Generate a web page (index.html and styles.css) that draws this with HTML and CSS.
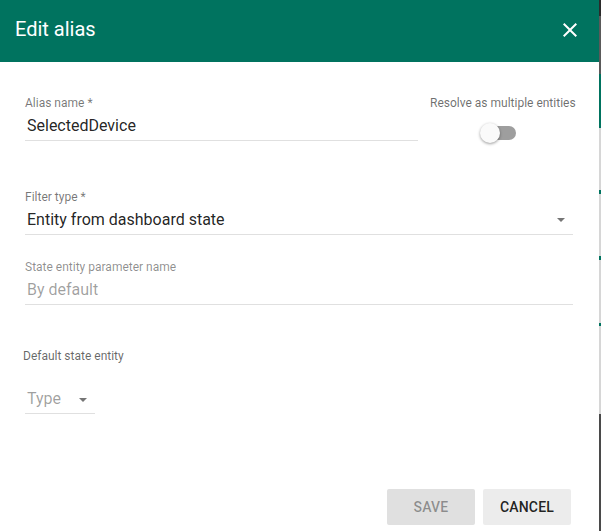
FILE: index.html
```html
<!DOCTYPE html>
<html>
<head>
<meta charset="utf-8">
<link rel="stylesheet" href="styles.css">
</head>
<body>
<div class="page">
  <div class="dialog">
    <div class="header">
      <span class="title">Edit alias</span>
      <svg class="close" width="24" height="24" viewBox="0 0 24 24"><path d="M19 6.41L17.59 5 12 10.59 6.41 5 5 6.41 10.59 12 5 17.59 6.41 19 12 13.41 17.59 19 19 17.59 13.41 12z" fill="#fff"/></svg>
    </div>
    <div class="content">
      <div class="row-top">
        <div class="field alias">
          <div class="label">Alias name *</div>
          <div class="value">SelectedDevice</div>
        </div>
        <div class="resolve">
          <div class="label dark">Resolve as multiple entities</div>
          <div class="toggle"><span class="track"></span><span class="thumb"></span></div>
        </div>
      </div>
      <div class="field filter">
        <div class="label">Filter type *</div>
        <div class="value select">Entity from dashboard state<span class="arrow"></span></div>
      </div>
      <div class="field param">
        <div class="label light">State entity parameter name</div>
        <div class="value placeholder">By default</div>
      </div>
      <div class="section-label">Default state entity</div>
      <div class="type-select">
        <span class="placeholder">Type</span><span class="arrow"></span>
      </div>
    </div>
    <div class="actions">
      <button class="btn save">SAVE</button>
      <button class="btn cancel">CANCEL</button>
    </div>
  </div>
  <div class="strip">
    <div class="s1"></div><div class="s2"></div><div class="s3"></div><div class="s4"></div>
    <div class="s5"></div><div class="s4"></div><div class="s5"></div><div class="s4"></div>
    <div class="s5"></div><div class="s4"></div><div class="s6"></div><div class="s7"></div>
  </div>
</div>
</body>
</html>
```
FILE: styles.css
```css
* { box-sizing: border-box; }
html, body { margin: 0; padding: 0; }
body { font-family: Roboto, "Noto Sans", sans-serif; background: #fff; }
.page { display: flex; width: 601px; height: 531px; overflow: hidden; }
.dialog { width: 599px; height: 531px; display: flex; flex-direction: column; background: #fff; }
.header { height: 62px; background: #00735f; display: flex; align-items: center; justify-content: space-between; padding: 0 17px 0 15px; }
.title { color: #fff; font-size: 20px; line-height: 24px; margin-top: -4px; }
.close { width: 24px; height: 24px; margin-top: -2px; }
.content { padding: 0 0 0 25px; flex: 1; }
.label { font-size: 12px; line-height: 14px; color: rgba(0,0,0,0.54); }
.label.dark { color: rgba(0,0,0,0.58); }
.label.light { color: rgba(0,0,0,0.45); }
.value { font-size: 16px; line-height: 20px; color: rgba(0,0,0,0.87); padding: 6px 2px 4px; border-bottom: 1px solid rgba(0,0,0,0.12); }
.row-top { display: flex; padding-top: 34px; }
.alias { width: 393px; }
.resolve { margin-left: 12px; display: flex; flex-direction: column; align-items: center; padding-top: 0; }
.toggle { position: relative; width: 36px; height: 20px; margin-top: 13px; margin-left: -7px; }
.track { position: absolute; left: 3px; top: 3px; width: 32px; height: 14px; border-radius: 7px; background: #9e9e9e; }
.thumb { position: absolute; left: -1px; top: 0; width: 20px; height: 20px; border-radius: 50%; background: #fafafa; box-shadow: 0 1px 3px rgba(0,0,0,0.4); }
.filter { width: 548px; margin-top: 47px; }
.select { position: relative; }
.arrow { position: absolute; width: 0; height: 0; border-left: 4px solid transparent; border-right: 4px solid transparent; border-top: 4px solid #757575; }
.select .arrow { right: 8px; top: 14px; }
.param { width: 548px; margin-top: 25px; }
.placeholder { color: rgba(0,0,0,0.38); }
.section-label { font-size: 12px; line-height: 14px; color: rgba(0,0,0,0.6); margin: 44px 0 0 -2px; }
.type-select { position: relative; width: 70px; margin-top: 26px; font-size: 16px; line-height: 20px; padding: 0 2px 4px; border-bottom: 1px solid rgba(0,0,0,0.12); }
.type-select .arrow { right: 8px; top: 9px; }
.actions { display: flex; justify-content: flex-end; gap: 8px; padding: 0 28px 6px 0; }
.btn { width: 88px; height: 36px; border: none; border-radius: 2px; font-family: Roboto, sans-serif; font-size: 14px; font-weight: 500; letter-spacing: 0.2px; }
.save { background: #e0e0e0; color: rgba(0,0,0,0.38); }
.cancel { background: #ececec; color: rgba(0,0,0,0.87); }
.strip { width: 2px; display: flex; flex-direction: column; }
.strip div { width: 2px; }
.s1 { height: 16px; background: #2b2b2b; }
.s2 { height: 60px; background: #5a5a5a; }
.s3 { height: 55px; background: #00735f; }
.s4 { height: 64px; background: #d6d6d6; }
.s5 { height: 4px; background: #00735f; }
.s6 { height: 26px; background: #d6d6d6; }
.s7 { height: 120px; background: #4a4a4a; }
```
